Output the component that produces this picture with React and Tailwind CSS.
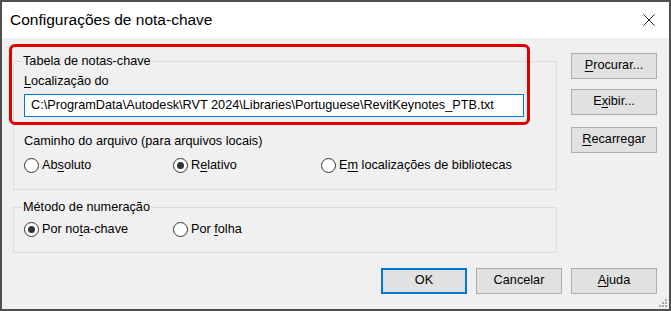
import React from 'react';

const FONT = { fontFamily: '"Liberation Sans", Arial, sans-serif' };

const U = ({ children }) => <span className="underline underline-offset-2">{children}</span>;

const Radio = ({ checked, children }) => (
  <label className="flex items-center h-[16px] leading-[16px]">
    <span className="w-[15px] h-[15px] rounded-full border border-[#333333] bg-white flex items-center justify-center shrink-0">
      {checked && <span className="w-[7px] h-[7px] rounded-full bg-[#333333]" />}
    </span>
    <span className="ml-[3px]">{children}</span>
  </label>
);

const Btn = ({ children, primary }) => (
  <button
    className={`w-[86px] h-[26px] bg-[#e1e1e1] text-[12.7px] text-black ${
      primary ? 'border-2 border-[#0078d7]' : 'border border-[#adadad]'
    }`}
  >
    {children}
  </button>
);

const Group = ({ title, className, children }) => (
  <fieldset className={`border border-[#dcdcdc] m-0 p-0 ${className || ''}`}>
    <legend className="ml-[8px] px-[1px] leading-[16px]">{title}</legend>
    {children}
  </fieldset>
);

export default function App() {
  return (
    <div
      className="w-[671px] h-[311px] border-2 border-[#4f4f4f] flex flex-col text-[12.7px] text-black overflow-hidden"
      style={FONT}
    >
      {/* title bar */}
      <div className="h-[36px] bg-white flex items-center justify-between pl-[8px] pr-[14px] shrink-0">
        <span className="text-[15.5px]">Configurações de nota-chave</span>
        <svg width="12" height="12" viewBox="0 0 12 12">
          <path d="M0.5 0.5 L11.5 11.5 M11.5 0.5 L0.5 11.5" stroke="#222" strokeWidth="1" />
        </svg>
      </div>

      {/* body */}
      <div className="flex-1 bg-[#f0f0f0] relative flex flex-col">
        <div className="flex">
          <div className="w-[555px] pl-[11px] pt-[15px]">
            <Group title="Tabela de notas-chave">
              <div className="pl-[10px] pr-[32px] pt-[4px] pb-[16px]">
                <div className="leading-[16px]">
                  <U>L</U>ocalização do
                </div>
                <div className="mt-[5px] h-[23px] border border-[#0078d7] bg-white flex items-center pl-[6px] whitespace-nowrap">
                  C:\ProgramData\Autodesk\RVT 2024\Libraries\Portuguese\RevitKeynotes_PTB.txt
                </div>
                <div className="mt-[16px] leading-[16px]">Caminho do arquivo (para arquivos locais)</div>
                <div className="mt-[8px] grid grid-cols-[149px_148px_1fr]">
                  <Radio>
                    Ab<U>s</U>oluto
                  </Radio>
                  <Radio checked>
                    R<U>e</U>lativo
                  </Radio>
                  <Radio>
                    E<U>m</U> localizações de bibliotecas
                  </Radio>
                </div>
              </div>
            </Group>

            <Group title="Método de numeração" className="mt-[9px]">
              <div className="pl-[10px] pt-[6px] pb-[15px] grid grid-cols-[149px_1fr]">
                <Radio checked>
                  Por no<U>t</U>a-chave
                </Radio>
                <Radio>
                  Por <U>f</U>olha
                </Radio>
              </div>
            </Group>
          </div>

          <div className="ml-[14px] pt-[15px] flex flex-col">
            <Btn>
              <U>P</U>rocurar...
            </Btn>
            <div className="mt-[10px]">
              <Btn>
                E<U>x</U>ibir...
              </Btn>
            </div>
            <div className="mt-[12px]">
              <Btn>
                <U>R</U>ecarregar
              </Btn>
            </div>
          </div>
        </div>

        <div className="mt-[15px] flex justify-end gap-[9px] pr-[12px]">
          <Btn primary>OK</Btn>
          <Btn>Cancelar</Btn>
          <Btn>
            <U>A</U>juda
          </Btn>
        </div>

        {/* red highlight */}
        <div className="absolute left-[7px] top-[6px] w-[521px] h-[81px] border-[3px] border-[#e00000] rounded-[6px] pointer-events-none" />

        {/* resize grip */}
        <svg className="absolute right-[1px] bottom-[1px]" width="9" height="9" viewBox="0 0 9 9">
          {[
            [6, 0],
            [3, 3],
            [6, 3],
            [0, 6],
            [3, 6],
            [6, 6],
          ].map(([x, y]) => (
            <rect key={`${x}-${y}`} x={x} y={y} width="2" height="2" fill="#a8a8a8" />
          ))}
        </svg>
      </div>
    </div>
  );
}
